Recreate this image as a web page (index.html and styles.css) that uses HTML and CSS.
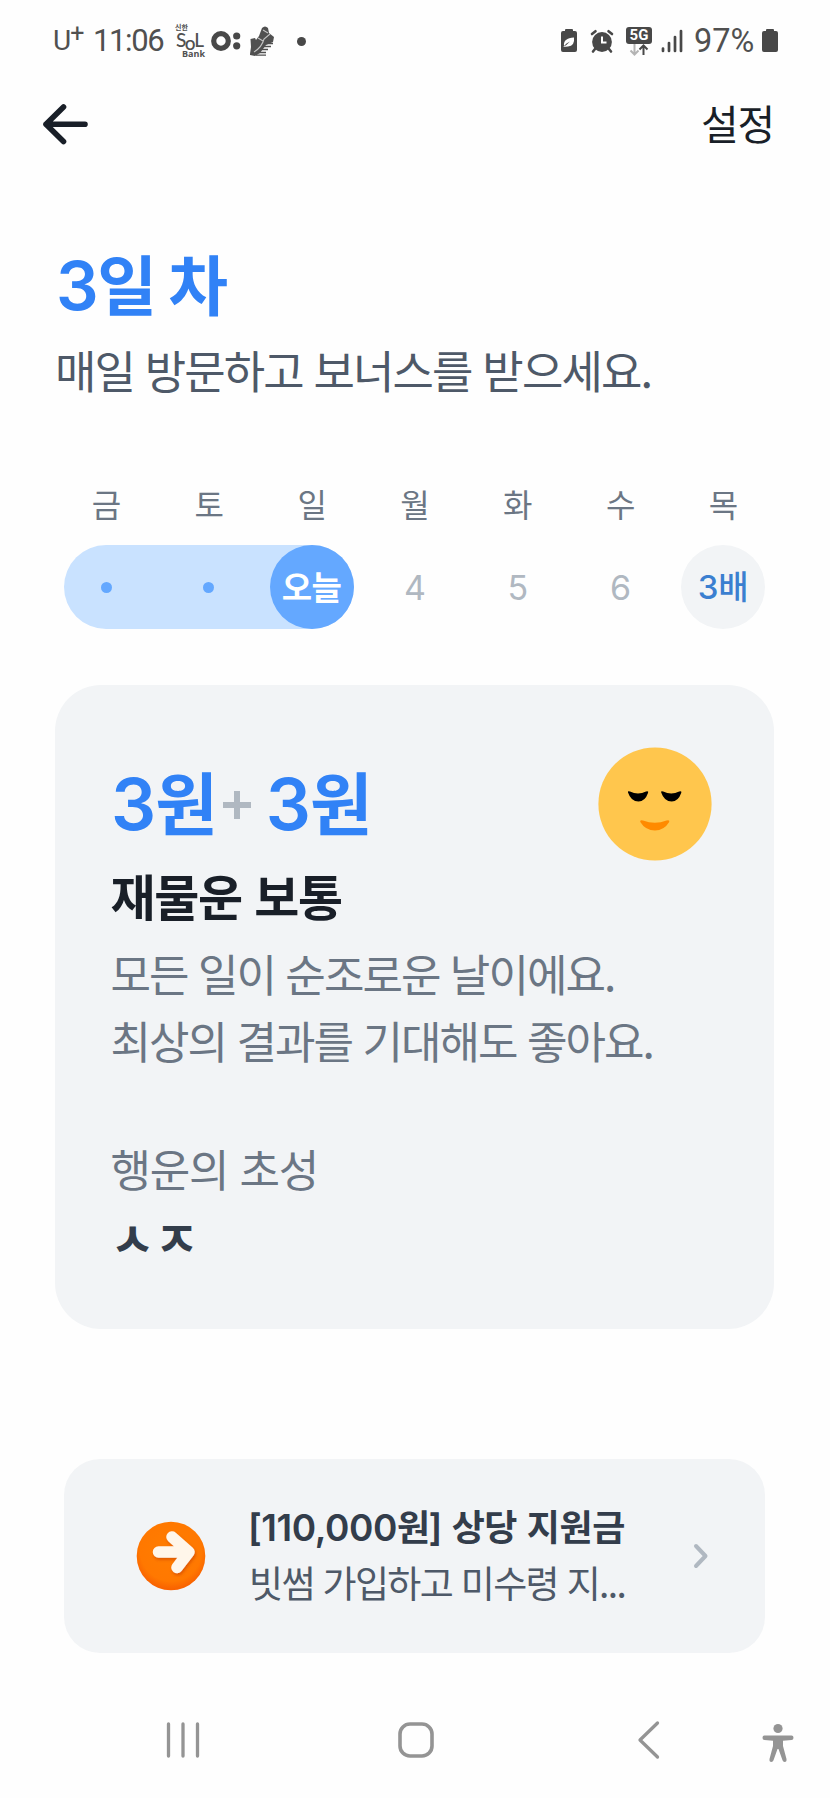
FILE: index.html
```
<!DOCTYPE html>
<html lang="ko">
<head>
<meta charset="utf-8">
<title>3일 차</title>
<link rel="stylesheet" href="styles.css">
</head>
<body>
<div class="screen">
  <div class="status">
    <span class="carrier">U<sup class="plus-sign">+</sup></span>
    <span class="clock">11:06</span>
    <span class="sol"><span class="sol-top">신한</span><span class="sol-mid">S<span class="sol-o">o</span>L</span><span class="sol-bank">Bank</span></span>
    <svg class="ring" width="32" height="24" viewBox="0 0 32 24"><circle cx="11" cy="12" r="7.3" fill="none" stroke="#484848" stroke-width="5.2"/><circle cx="26.7" cy="7" r="3.6" fill="#484848"/><circle cx="26.7" cy="16.8" r="3.6" fill="#484848"/></svg>
    <svg class="shoe" width="26" height="32" viewBox="0 0 26 32"><path d="M1 29 2 22 1.500 14 6 13 7 15 10 11 13 3Q16 0 19 3L20 8 25 12 24 17 17 20 11 28 6 31 1 30Z" fill="#505050"/><path d="M5 27Q13 22 15 14L21 9M9 13l5 3M14 5l5 3" fill="none" stroke="#c4c4c4" stroke-width="1.100"/><path d="M16 18.500h8M14 21.500h8M12 24.500h7M10 27.500h7M7 30.200h10" stroke="#505050" stroke-width="1.300"/></svg>
    <span class="more"></span>
    <span class="spacer"></span>
    <svg class="saver" width="18" height="26" viewBox="0 0 18 26"><path d="M5 3V2q0-1 1-1h6q1 0 1 1v1h2q2 0 2 2v17q0 2-2 2H3q-2 0-2-2V5q0-2 2-2Z" fill="#484848"/><path d="M4 18Q3 10 14 9.500Q15 18 8 18.500L3 19Q7 17 10 13.500Q6 15 4 18Z" fill="#fff"/></svg>
    <svg class="alarm" width="24" height="26" viewBox="0 0 24 26"><circle cx="12" cy="14" r="9.900" fill="#484848"/><path d="M2 6 5.500 3.200M22 6 18.500 3.200M5 21l-2 2.500M19 21l2 2.500" stroke="#484848" stroke-width="2.600" stroke-linecap="round"/><path d="M12 8.500v6h4.500" fill="none" stroke="#fff" stroke-width="2"/></svg>
    <span class="net"><span class="net-tag">5G</span><svg width="20" height="12" viewBox="0 0 20 12"><path d="M5.500 0v10M1.500 6.500l4 4 4-4" fill="none" stroke="#b4b4b4" stroke-width="2"/><path d="M14.500 11V1.500M10.500 5.500l4-4 4 4" fill="none" stroke="#484848" stroke-width="2"/></svg></span>
    <svg class="signal" width="22" height="24" viewBox="0 0 22 24"><path d="M2 19.500v2.500M8 14v8M14 8v14M20 2v20" stroke="#484848" stroke-width="2.700" stroke-linecap="round"/></svg>
    <span class="percent">97%</span>
    <svg class="battery" width="18" height="26" viewBox="0 0 18 26"><path d="M5 3V2q0-1 1-1h6q1 0 1 1v1h2q2 0 2 2v17q0 2-2 2H3q-2 0-2-2V5q0-2 2-2Z" fill="#484848"/></svg>
  </div>

  <header class="topbar">
    <svg width="50" height="44" viewBox="0 0 50 44"><path d="M23.500 5 6 22.300 23.500 39.500M6 22.300H45" fill="none" stroke="#191f28" stroke-width="5.600" stroke-linecap="round" stroke-linejoin="round"/></svg>
    <span class="settings">설정</span>
  </header>

  <h1 class="title"><span class="num">3</span>일 차</h1>
  <p class="subtitle">매일 방문하고 보너스를 받으세요.</p>

  <div class="week names">
    <span>금</span><span>토</span><span>일</span><span>월</span><span>화</span><span>수</span><span>목</span>
  </div>
  <div class="week marks">
    <div class="streak"><span class="cell"><i class="dot"></i></span><span class="cell"><i class="dot"></i></span><span class="cell today">오늘</span></div>
    <span class="cell day">4</span><span class="cell day">5</span><span class="cell day">6</span><span class="cell bonus"><span><span class="num">3</span>배</span></span>
  </div>

  <section class="card">
    <div class="reward">
      <div class="amount"><span class="won"><span class="num">3</span>원</span><svg class="plus" width="28" height="28" viewBox="0 0 28 28"><path d="M14 0v28M0 14h28" stroke="#b0b8c1" stroke-width="6"/></svg><span class="won"><span class="num">3</span>원</span></div>
      <svg class="face" width="114" height="114" viewBox="0 0 114 114"><circle cx="57" cy="57" r="56.600" fill="#ffc64d"/><path d="M30 45.500Q29.500 43.500 32 44.500Q40 48.500 48 44.500Q51 43.500 50 46Q47 54.500 40.500 54.500Q33 54.500 30 45.500ZM63.200 45.500Q62.700 43.500 65.200 44.500Q73.200 48.500 81.200 44.500Q84.200 43.500 83.200 46Q80.200 54.500 73.700 54.500Q66.200 54.500 63.200 45.500Z" fill="#000"/><path d="M42.300 75Q41.500 72.500 45 73.500Q57 78 68.500 73.500Q72 72.500 71.200 75Q66 83.500 57 83.500Q47.500 83.500 42.300 75Z" fill="#ff8a00"/></svg>
    </div>
    <h2 class="fortune">재물운 보통</h2>
    <p class="message">모든 일이 순조로운 날이에요.<br>최상의 결과를 기대해도 좋아요.</p>
    <p class="label">행운의 초성</p>
    <p class="initials">ㅅㅈ</p>
  </section>

  <a class="banner">
    <svg class="badge" width="74" height="74" viewBox="0 0 74 74">
      <defs>
        <radialGradient id="orange" cx=".5" cy=".42" r=".56"><stop offset="0" stop-color="#ff7d00"/><stop offset=".8" stop-color="#ff7800"/><stop offset="1" stop-color="#f96300"/></radialGradient>
        <filter id="drop" x="-20%" y="-20%" width="150%" height="150%"><feDropShadow dx="1" dy="2" stdDeviation="1.500" flood-color="#c83c00" flood-opacity=".6"/></filter>
      </defs>
      <circle cx="37" cy="37" r="34.300" fill="url(#orange)"/>
      <path d="M24.500 33H53M38 18 55 33 43 48.500" fill="none" stroke="#fff6ea" stroke-width="11.500" stroke-linecap="round" stroke-linejoin="round" filter="url(#drop)"/>
    </svg>
    <div class="banner-text"><strong><span class="num">[110,000</span>원<span class="num">]</span> 상당 지원금</strong><span class="detail">빗썸 가입하고 미수령 지...</span></div>
    <svg class="chevron" width="18" height="28" viewBox="0 0 18 28"><path d="M4 4 13.500 14 4 24" fill="none" stroke="#b0b8c1" stroke-width="4" stroke-linecap="round" stroke-linejoin="round"/></svg>
  </a>

  <nav class="nav">
    <svg class="recents" width="34" height="38" viewBox="0 0 34 38"><path d="M2.500 3v32M17 3v32M31.500 3v32" stroke="#949494" stroke-width="3.300" stroke-linecap="round"/></svg>
    <svg class="home" width="38" height="38" viewBox="0 0 38 38"><rect x="3" y="3" width="32" height="32" rx="10" fill="none" stroke="#949494" stroke-width="3.600"/></svg>
    <svg class="back" width="24" height="40" viewBox="0 0 24 40"><path d="M20.500 3 3 20 20.500 37" fill="none" stroke="#949494" stroke-width="3.300" stroke-linecap="round" stroke-linejoin="round"/></svg>
    <svg class="access" width="34" height="42" viewBox="0 0 34 42"><circle cx="17" cy="6.500" r="4.600" fill="#949494"/><path d="M3.500 13.500h27q2 0 2 2.200t-2 2.300l-8.500.8V24l3.500 13q.4 2.800-1.800 3-1.700 0-2.200-1.800L17.500 27h-1l-4 11.200q-.5 1.800-2.200 1.800-2.200-.2-1.800-3L12 24v-5.200L3.500 18q-2 0-2-2.300t2-2.200Z" fill="#949494"/></svg>
  </nav>
</div>
</body>
</html>
```

FILE: styles.css
```
* { box-sizing: border-box; }
body { margin: 0; background: #fefefe; font-family: "Noto Sans CJK KR", sans-serif; color: #191f28; }
h1, h2, p { margin: 0; font-weight: 400; }
svg { display: block; flex: none; }
.screen { width: 830px; height: 1798px; overflow: hidden; display: flex; flex-direction: column; white-space: nowrap; }
.num { font-family: Inter, sans-serif; line-height: 1; }

.status { height: 82px; padding: 0 51px 0 53px; display: flex; align-items: center; color: #505050; font-family: Roboto, sans-serif; font-weight: 400; font-size: 31px; line-height: 36px; }
.carrier { width: 40px; font-size: 28px; }
.plus-sign { font-size: 25px; line-height: 0; vertical-align: 8px; font-weight: 400; margin-left: -1px; }
.clock { width: 82px; letter-spacing: -1.400px; }
.sol { display: flex; flex-direction: column; width: 33px; height: 36px; margin-right: 2px; }
.sol-top { font: 700 7px/8px "Noto Sans CJK KR", sans-serif; }
.sol-mid { font: 500 19px/17px Lato, sans-serif; letter-spacing: -1.500px; margin-left: 1px; }
.sol-o { vertical-align: -3px; line-height: 0; }
.sol-bank { font: 700 9px/11px "Open Sans", sans-serif; margin-left: 7px; }
.shoe { margin-left: 7px; }
.more { width: 9px; height: 9px; border-radius: 50%; background: #484848; margin-left: 22px; }
.spacer { flex: 1; }
.alarm { margin-left: 12px; }
.net { margin-left: 12px; width: 26px; display: flex; flex-direction: column; align-items: center; }
.net-tag { width: 26px; height: 17px; border-radius: 3px; background: #484848; color: #fff; text-align: center; font: 700 15px/17px Roboto, sans-serif; }
.signal { margin-left: 9px; }
.percent { margin-left: 11px; width: 67px; font-size: 32.500px; }

.topbar { height: 84px; padding: 0 56px 0 40px; display: flex; align-items: center; justify-content: space-between; }
.settings { font-size: 41px; line-height: 60px; letter-spacing: -1.200px; padding-bottom: 4px; }

.title { margin: 76px 0 0 56px; font-size: 65px; font-weight: 700; line-height: 80px; word-spacing: -7px; color: #3182f6; }
.title .num { font-size: 67px; font-weight: 600; letter-spacing: -1.500px; }
.subtitle { margin: 18px 0 0 55px; font-size: 45px; line-height: 60px; letter-spacing: -1.880px; color: #4e5968; }

.week { margin: 0 65px 0 64px; display: flex; justify-content: space-between; }
.names { margin-top: 83px; color: #6b7684; font-size: 32px; line-height: 40px; }
.names span { width: 84px; text-align: center; padding-left: 1px; }
.marks { margin-top: 22px; color: #b0b8c1; font-size: 34px; }
.cell { width: 84px; height: 84px; border-radius: 50%; display: flex; align-items: center; justify-content: center; }
.day { font-family: Inter, sans-serif; padding-left: 1px; }
.streak { width: 289.600px; border-radius: 42px; background: #c9e2ff; display: flex; justify-content: space-between; }
.dot { width: 11px; height: 11px; border-radius: 50%; background: #64a8ff; }
.today { background: #64a8ff; color: #fff; font-weight: 700; font-size: 33px; padding-bottom: 3px; letter-spacing: -.5px; }
.bonus { background: #f2f4f6; color: #3b7fd0; font-weight: 500; padding-bottom: 4px; font-size: 33px; letter-spacing: -.3px; }

.card { margin: 56px 56px 0 55px; height: 644px; border-radius: 46px; background: #f2f4f6; padding: 62px 62px 0 56px; }
.reward { display: flex; align-items: center; justify-content: space-between; height: 114px; }
.amount { display: flex; align-items: center; font-size: 68px; font-weight: 700; line-height: 80px; color: #3182f6; margin-top: -7px; }
.amount .num { font-weight: 600; font-size: 71px; letter-spacing: -1px; }
.plus { margin: 9px 15px 0 5px; }
.fortune { margin-top: 4px; font-size: 49px; font-weight: 700; line-height: 60px; letter-spacing: -1.300px; }
.message { margin-top: 15px; font-size: 44px; line-height: 66.500px; letter-spacing: -1.950px; color: #6b7684; }
.label { margin-top: 65px; font-size: 44px; line-height: 60px; letter-spacing: -1.200px; color: #6b7684; }
.initials { margin-top: 8px; font-size: 48px; font-weight: 700; line-height: 60px; color: #333d4b; }
.fortune, .message, .label, .initials { margin-left: -.5px; }

.banner { margin: 130px 65px 0 64px; height: 194px; border-radius: 36px; background: #f2f4f6; display: flex; align-items: center; padding-left: 70px; }
.banner-text { width: 400px; margin-left: 41px; display: flex; flex-direction: column; gap: 9px; padding-bottom: 6px; }
.banner-text strong { font-size: 36px; line-height: 48px; font-weight: 700; letter-spacing: -.4px; color: #333d4b; }
.banner-text .num { font-weight: 600; font-size: 37px; letter-spacing: -.450px; margin-left: -1px; }
.detail { font-size: 37px; line-height: 48px; letter-spacing: -1.650px; color: #4e5968; }
.chevron { margin-left: 43px; }

.nav { margin-top: 39px; height: 96px; display: flex; align-items: center; padding-left: 166px; }
.home { margin-left: 197px; }
.back { margin-left: 202px; }
.access { margin: 5px 0 0 100px; }
```
